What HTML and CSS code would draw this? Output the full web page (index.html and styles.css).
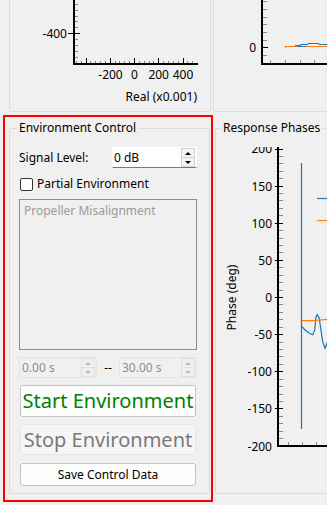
FILE: index.html
```html
<!DOCTYPE html>
<html lang="en">
<head>
    <meta charset="UTF-8">
    <title>Environment Control</title>
    <link rel="stylesheet" href="styles.css">
</head>
<body>
<div class="window">
    <div class="layout">
        <!-- top left: complex plane plot (cropped) -->
        <div class="group plot-top">
            <svg class="plot" width="199" height="111">
                <path class="axis" d="M64 0V65M63 64H188"/>
                <path class="tick-minor" d="M65 4.5H68M65 10.5H68M65 16.5H68M65 21.5H68M65 27.5H68M65 39.5H68M65 45.5H68M65 51.5H68M65 57.5H68"/>
                <path class="tick-minor" d="M66.5 61V63M71.5 61V63M80.5 61V63M85.5 61V63M90.5 61V63M95.5 61V63M105.5 61V63M109.5 61V63M114.5 61V63M119.5 61V63M129.5 61V63M134.5 61V63M139.5 61V63M143.5 61V63M153.5 61V63M158.5 61V63M163.5 61V63M168.5 61V63M177.5 61V63M182.5 61V63"/>
                <path class="tick-major" d="M58 33.5H70M76.5 58V63M100.5 58V63M124.5 58V63M148.5 58V63M173.5 58V63"/>
                <text class="axis-label" x="57" y="38" text-anchor="end">-400</text>
                <text class="axis-label" x="100.5" y="78.5" text-anchor="middle">-200</text>
                <text class="axis-label" x="124.5" y="78.5" text-anchor="middle">0</text>
                <text class="axis-label" x="148.7" y="78.5" text-anchor="middle">200</text>
                <text class="axis-label" x="173" y="78.5" text-anchor="middle">400</text>
                <text class="axis-label" x="187" y="101" text-anchor="end">Real (x0.001)</text>
            </svg>
        </div>

        <!-- top right: magnitude plot (cropped) -->
        <div class="group plot-top plot-top-right">
            <svg class="plot" width="114" height="111">
                <path class="axis" d="M48 0V65M47 64H115"/>
                <path class="tick-minor" d="M49 1.5H53M49 9.5H53M49 17.5H53M49 24.5H53M49 32.5H53M49 40.5H53M49 55.5H53M56.5 60V63M71.5 60V63M86.5 60V63M100.5 60V63"/>
                <path class="tick-major" d="M48 47.5H54"/>
                <text class="axis-label" x="42" y="52" text-anchor="end">0</text>
                <path class="line-orange" d="M71.5 48V46.5H114"/>
                <path class="line-blue" d="M81 45.5H86L87 44.5H93L95 43.5H104L106 44.5H114"/>
                <path class="line-blue" d="M84 46.5H92"/>
            </svg>
        </div>

        <div class="group env">
            <div class="group-title">Environment Control</div>

            <div class="row signal-row">
                <span>Signal Level:</span>
                <div class="spin">
                    <span class="spin-value">0 dB</span>
                    <div class="spin-buttons">
                        <span class="spin-btn up"></span>
                        <span class="spin-btn down"></span>
                    </div>
                </div>
            </div>

            <label class="row check-row"><span class="checkbox"></span>Partial Environment</label>

            <div class="env-list">
                <div class="env-item">Propeller Misalignment</div>
            </div>

            <div class="row time-row">
                <div class="spin spin-disabled">
                    <span class="spin-value">0.00 s</span>
                    <div class="spin-buttons">
                        <span class="spin-btn up"></span>
                        <span class="spin-btn down"></span>
                    </div>
                </div>
                <span class="dash">--</span>
                <div class="spin spin-disabled">
                    <span class="spin-value">30.00 s</span>
                    <div class="spin-buttons">
                        <span class="spin-btn up"></span>
                        <span class="spin-btn down"></span>
                    </div>
                </div>
            </div>

            <button type="button" class="btn btn-big btn-start">Start Environment</button>
            <button type="button" class="btn btn-big btn-stop" disabled>Stop Environment</button>
            <button type="button" class="btn btn-save">Save Control Data</button>
        </div>

        <div class="group phases">
            <div class="group-title">Response Phases</div>
            <svg class="plot" width="112" height="356">
                <defs>
                    <clipPath id="phase-clip"><rect x="0" y="11" width="112" height="345"/></clipPath>
                </defs>
                <g clip-path="url(#phase-clip)">
                    <path class="axis" d="M62 11V311M61 310H115"/>
                    <path class="tick-minor" d="M63 302.5H67M63 295.5H67M63 287.5H67M63 280.5H67M63 265.5H67M63 258.5H67M63 250.5H67M63 243.5H67M63 228.5H67M63 220.5H67M63 213.5H67M63 206.5H67M63 191.5H67M63 183.5H67M63 176.5H67M63 168.5H67M63 154.5H67M63 146.5H67M63 139.5H67M63 131.5H67M63 116.5H67M63 109.5H67M63 102.5H67M63 94.5H67M63 79.5H67M63 72.5H67M63 64.5H67M63 57.5H67M63 42.5H67M63 35.5H67M63 27.5H67M63 20.5H67M72.5 306V309M86.5 306V309M100.5 306V309"/>
                    <path class="tick-major" d="M59 272.5H67M59 235.5H67M59 198.5H67M59 161.5H67M59 124.5H67M59 87.5H67M59 50.5H67M59 13.5H67"/>
                    <text class="axis-label" x="56" y="314.5" text-anchor="end">-200</text>
                    <text class="axis-label" x="56" y="277" text-anchor="end">-150</text>
                    <text class="axis-label" x="56" y="240" text-anchor="end">-100</text>
                    <text class="axis-label" x="56" y="203" text-anchor="end">-50</text>
                    <text class="axis-label" x="56" y="166" text-anchor="end">0</text>
                    <text class="axis-label" x="56" y="128.5" text-anchor="end">50</text>
                    <text class="axis-label" x="56" y="91.5" text-anchor="end">100</text>
                    <text class="axis-label" x="56" y="54.5" text-anchor="end">150</text>
                    <text class="axis-label" x="56" y="17" text-anchor="end">200</text>
                </g>
                <text class="axis-label" transform="translate(20 161.5) rotate(-90)" text-anchor="middle">Phase (deg)</text>
                <path class="line-blue" d="M85.5 27V293"/>
                <path class="line-blue" d="M101 62.5H113"/>
                <path class="line-orange" d="M101 84.5H113"/>
                <path class="line-blue" d="M86 190.7L89 194L93.3 197.3L96.7 198.7L98.7 194L100 180.7L101.3 178.7L103.3 182.3L104.7 192.3L106.7 205.7L109 212.3L111 207.3L113 200"/>
                <path class="line-orange" d="M86 184.7H97L113 183.3"/>
            </svg>
        </div>
    </div>

    <div class="highlight"></div>
</div>
</body>
</html>
```

FILE: styles.css
```css
body {
    margin: 0;
    background: #f0f0f0;
    color: #000;
    font-family: "Noto Sans", "Liberation Sans", sans-serif;
    font-size: 12px;
    line-height: 14px;
}
.window {
    position: relative;
    width: 327px;
    height: 505px;
    overflow: hidden;
}
.layout {
    display: grid;
    grid-template-columns: 202px 130px;
    grid-template-rows: 112px auto;
    column-gap: 3px;
    row-gap: 16px;
    padding-left: 9px;
}

/* group boxes */
.group {
    border: 1px solid #dcdcdc;
    border-radius: 2px;
    box-sizing: border-box;
}
.group-title {
    width: max-content;
    margin: -8px 0 0 7px;
    padding: 0 2px;
    background: #f0f0f0;
}
.plot-top {
    border-top: none;
    border-radius: 0 0 2px 2px;
    overflow: hidden;
}
.plot-top-right {
    margin-left: -1px;
}
.plot {
    display: block;
}

/* plots */
.axis {
    fill: none;
    stroke: #000;
    stroke-width: 2;
}
.tick-minor {
    fill: none;
    stroke: #8a8a8a;
    stroke-width: 1;
}
.tick-major {
    fill: none;
    stroke: #000;
    stroke-width: 1;
}
.axis-label {
    font-family: "Noto Sans", "Liberation Sans", sans-serif;
    font-size: 12px;
    fill: #000;
}
.line-blue {
    fill: none;
    stroke: #1f77b4;
    stroke-width: 1.2;
}
.line-orange {
    fill: none;
    stroke: #ff7f0e;
    stroke-width: 1.2;
}

/* environment control */
.env {
    width: 201px;
    padding: 0 12px 7px 9px;
    display: flex;
    flex-direction: column;
}
.env .group-title {
    margin-left: -2px;
}
.row {
    display: flex;
    align-items: center;
}
.signal-row {
    margin-top: 12px;
    height: 21px;
    justify-content: space-between;
}
.spin {
    display: flex;
    height: 21px;
    box-sizing: border-box;
    background: #fff;
    border: 1px solid #fff;
    border-bottom-color: #7a7a7a;
}
.signal-row .spin {
    width: 85px;
}
.spin-value {
    flex: 1;
    align-self: center;
    padding-left: 1px;
}
.spin-buttons {
    width: 14px;
    margin-right: 1px;
    display: flex;
    flex-direction: column;
}
.spin-btn {
    flex: 1;
    display: flex;
    align-items: center;
    justify-content: center;
    border: 1px solid #d2d2d2;
    background: #f4f4f4;
}
.spin-btn + .spin-btn {
    border-top: none;
}
.spin-btn::before {
    content: "";
    border-left: 3px solid transparent;
    border-right: 3px solid transparent;
}
.up::before {
    border-bottom: 3px solid #000;
}
.down::before {
    border-top: 3px solid #000;
}
.spin-disabled {
    width: 78px;
    background: #f0f0f0;
    border-color: #e4e4e4;
    color: #8d8d8d;
}
.spin-disabled .spin-value {
    padding-left: 2px;
}
.spin-disabled .spin-btn {
    border-color: #e0e0e0;
    background: #f0f0f0;
}
.spin-disabled .up::before {
    border-bottom-color: #b8b8b8;
}
.spin-disabled .down::before {
    border-top-color: #b8b8b8;
}

.check-row {
    margin-top: 6px;
    height: 20px;
    gap: 4px;
}
.checkbox {
    width: 13px;
    height: 13px;
    box-sizing: border-box;
    margin-left: 1px;
    border: 1px solid #333;
    border-radius: 2px;
    background: #fff;
}
.env-list {
    margin-top: 5px;
    height: 151px;
    box-sizing: border-box;
    border: 1px solid #8c8c8c;
    padding: 4px;
    color: #9b9b9b;
}
.time-row {
    margin-top: 7px;
    height: 21px;
    justify-content: space-between;
}

.btn {
    width: 176px;
    margin: 0 0 0 1px;
    padding: 0;
    box-sizing: border-box;
    border: 1px solid #c3c3c3;
    border-radius: 3px;
    background: #fdfdfd;
    color: #000;
    font-family: inherit;
    font-size: 12px;
    line-height: 14px;
}
.btn-big {
    font-size: 20px;
    line-height: 26px;
}
.btn-start {
    margin-top: 7px;
    height: 32px;
    color: #008000;
}
.btn-stop {
    margin-top: 7px;
    height: 31px;
    color: #7a7a7a;
    background: #f6f6f6;
    border-color: #e6e6e6;
}
.btn-save {
    margin-top: 8px;
    height: 23px;
}

/* response phases */
.phases {
    margin-left: 1px;
}
.phases .group-title {
    margin-left: 5px;
}
.phases .plot {
    margin-top: 1px;
}

/* annotation frame drawn over the control group */
.highlight {
    position: absolute;
    left: 3px;
    top: 115px;
    width: 210px;
    height: 387px;
    box-sizing: border-box;
    border: 2px solid #f00;
    pointer-events: none;
}
```
